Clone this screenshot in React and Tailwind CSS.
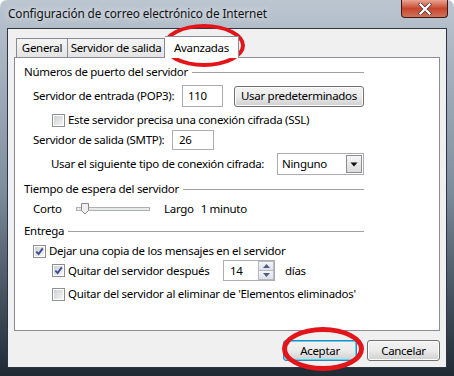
import React from "react";

const Check = ({ checked }) => (
  <span className="w-[13px] h-[13px] shrink-0 border border-[#8e8f8f] bg-white p-[1px] flex">
    <span className="flex-1 bg-linear-to-br from-[#cbcfd5] to-[#f6f6f6] flex items-center justify-center">
      {checked && (
        <svg width="9" height="9" viewBox="0 0 9 9">
          <path d="M1.3 4.6 L3.6 7 L7.8 1.4" fill="none" stroke="#3c4f95" strokeWidth="1.9" />
        </svg>
      )}
    </span>
  </span>
);

const Header = ({ label }) => (
  <div className="flex items-center h-[16px]">
    <span>{label}</span>
    <span className="flex-1 ml-[4px] border-t border-[#a0a0a0]" />
  </div>
);

function Btn({ label, primary }) {
  return (
    <div
      className={
        "h-[21px] w-full rounded-[3px] border flex items-center justify-center bg-linear-to-b from-[#f2f2f2] via-[#ebebeb] to-[#cfcfcf] " +
        (primary
          ? "border-[#3c7fb1] shadow-[inset_0_0_0_1px_#48d8fb]"
          : "border-[#707070] shadow-[inset_0_0_0_1px_#fcfcfc]")
      }
    >
      {label}
    </div>
  );
}

export default function App() {
  return (
    <div className="relative w-[454px] h-[376px] overflow-hidden whitespace-nowrap font-['Noto_Sans',sans-serif] text-[11.5px] tracking-[-0.3px] leading-none text-black rounded-t-[7px] bg-linear-to-b from-[#bcc6d1] via-[#7f8e9d] to-[#1f2a35]">
      {/* title bar */}
      <div className="h-[28px] flex items-start">
        <span className="ml-[8px] mt-[8px] text-[11.8px] tracking-[-0.1px] text-[#111] [text-shadow:0_0_6px_#ffffff]">
          Configuración de correo electrónico de Internet
        </span>
        <div className="ml-auto mr-[6px] w-[47px] h-[18px] rounded-b-[4px] border border-t-0 border-[#3c1a14] bg-linear-to-b from-[#e8a493] via-[#c7452c] to-[#d0725a] flex items-center justify-center">
          <svg width="14" height="12" viewBox="0 0 14 12">
            <path d="M2.5 1.5 L11.5 10.5 M11.5 1.5 L2.5 10.5" stroke="#3a3a3a" strokeWidth="3.6" strokeLinecap="square" />
            <path d="M2.5 1.5 L11.5 10.5 M11.5 1.5 L2.5 10.5" stroke="#ffffff" strokeWidth="2.2" strokeLinecap="square" />
          </svg>
        </div>
      </div>

      {/* client area */}
      <div className="mx-[7px] h-[340px] border border-[#2b3641] bg-[#f0f0f0] flex flex-col px-[6px] pt-[7px]">
        {/* tabs */}
        <div className="h-[21px] flex items-end pl-[2px] relative z-10">
          <div className="h-[19px] w-[52px] flex items-center justify-center border border-b-0 border-[#898c95] bg-linear-to-b from-[#f5f5f5] to-[#e3e3e3]">
            General
          </div>
          <div className="h-[19px] w-[97px] flex items-center justify-center border border-b-0 border-l-0 border-[#898c95] bg-linear-to-b from-[#f5f5f5] to-[#e3e3e3]">
            Servidor de salida
          </div>
          <div className="h-[22px] w-[74px] -mb-[1px] flex items-center justify-center border border-b-0 border-l-0 border-[#898c95] bg-white">
            Avanzadas
          </div>
        </div>

        {/* panel */}
        <div className="h-[274px] border border-[#898c95] bg-white pt-[6px]">
          <div className="ml-[9px] w-[340px] flex flex-col">
            <Header label="Números de puerto del servidor" />

            <div className="mt-[5px] h-[22px] flex items-center pl-[9px]">
              <span className="w-[149px]">Servidor de entrada (POP3):</span>
              <span className="w-[41px] h-[22px] border border-[#abadb3] flex items-center pl-[5px]">110</span>
              <span className="ml-[11px] w-[130px] h-[21px] rounded-[3px] border border-[#707070] bg-linear-to-b from-[#f2f2f2] via-[#ebebeb] to-[#cfcfcf] shadow-[inset_0_0_0_1px_#fcfcfc] flex items-center justify-center">
                Usar predeterminados
              </span>
            </div>

            <div className="mt-[5px] h-[16px] flex items-center pl-[28px] gap-[3px]">
              <Check />
              <span>Este servidor precisa una conexión cifrada (SSL)</span>
            </div>

            <div className="mt-[2px] h-[20px] flex items-center pl-[9px]">
              <span className="w-[139px]">Servidor de salida (SMTP):</span>
              <span className="w-[42px] h-[20px] border border-[#abadb3] flex items-center pl-[6px]">26</span>
            </div>

            <div className="mt-[3px] h-[22px] flex items-center pl-[27px]">
              <span className="w-[226px]">Usar el siguiente tipo de conexión cifrada:</span>
              <span className="w-[87px] h-[22px] border border-[#abadb3] flex items-center pl-[4px] pr-[1px]">
                <span className="flex-1">Ninguno</span>
                <span className="w-[16px] h-[18px] border border-[#8f8f8f] bg-linear-to-b from-[#f6f6f6] to-[#dcdcdc] flex items-center justify-center">
                  <svg width="8" height="5" viewBox="0 0 8 5">
                    <path d="M0.5 0.5 H7.5 L4 4.5 Z" fill="#111" />
                  </svg>
                </span>
              </span>
            </div>

            <div className="mt-[6px]">
              <Header label="Tiempo de espera del servidor" />
            </div>

            <div className="mt-[3px] h-[18px] flex items-center pl-[9px]">
              <span className="w-[43px]">Corto</span>
              <svg width="76" height="14" viewBox="0 0 76 14">
                <rect x="0.5" y="5.5" width="73" height="3" fill="#e7eaea" stroke="#b0b0b0" />
                <path d="M5.5 1.5 H12.5 V8.5 L9 12 L5.5 8.5 Z" fill="#f0f0f0" stroke="#8a8a8a" />
              </svg>
              <span className="ml-[12px]">Largo</span>
              <span className="ml-[7px]">1 minuto</span>
            </div>

            <div className="mt-[5px]">
              <Header label="Entrega" />
            </div>

            <div className="mt-[4px] h-[16px] flex items-center pl-[9px] gap-[3px]">
              <Check checked />
              <span>Dejar una copia de los mensajes en el servidor</span>
            </div>

            <div className="mt-[1px] h-[21px] flex items-center pl-[28px]">
              <Check checked />
              <span className="ml-[3px] w-[155px]">Quitar del servidor después</span>
              <span className="w-[52px] h-[21px] border border-[#abadb3] flex items-center pl-[6px]">
                <span className="flex-1">14</span>
                <span className="w-[16px] h-[19px] flex flex-col">
                  <span className="flex-1 border border-[#b5b9c1] bg-linear-to-b from-[#f4f5f7] to-[#dde1e8] flex items-center justify-center">
                    <svg width="7" height="4" viewBox="0 0 7 4"><path d="M0 4 H7 L3.5 0 Z" fill="#4d5c85" /></svg>
                  </span>
                  <span className="flex-1 border border-t-0 border-[#b5b9c1] bg-linear-to-b from-[#f4f5f7] to-[#dde1e8] flex items-center justify-center">
                    <svg width="7" height="4" viewBox="0 0 7 4"><path d="M0 0 H7 L3.5 4 Z" fill="#4d5c85" /></svg>
                  </span>
                </span>
              </span>
              <span className="ml-[10px]">días</span>
            </div>

            <div className="mt-[5px] h-[16px] flex items-center pl-[28px] gap-[3px]">
              <Check />
              <span>Quitar del servidor al eliminar de 'Elementos eliminados'</span>
            </div>
          </div>
        </div>

        {/* footer */}
        <div className="mt-[9px] flex justify-end gap-[10px]">
          <span className="w-[74px]"><Btn label="Aceptar" primary /></span>
          <span className="w-[73px]"><Btn label="Cancelar" /></span>
        </div>
      </div>

      {/* red annotation ellipses */}
      <div className="absolute left-[163px] top-[24px] w-[82px] h-[43px] rounded-[50%] border-[4px] border-[#e3151a]" />
      <div className="absolute left-[282px] top-[327px] w-[82px] h-[44px] rounded-[50%] border-[5px] border-[#e3151a]" />
    </div>
  );
}
